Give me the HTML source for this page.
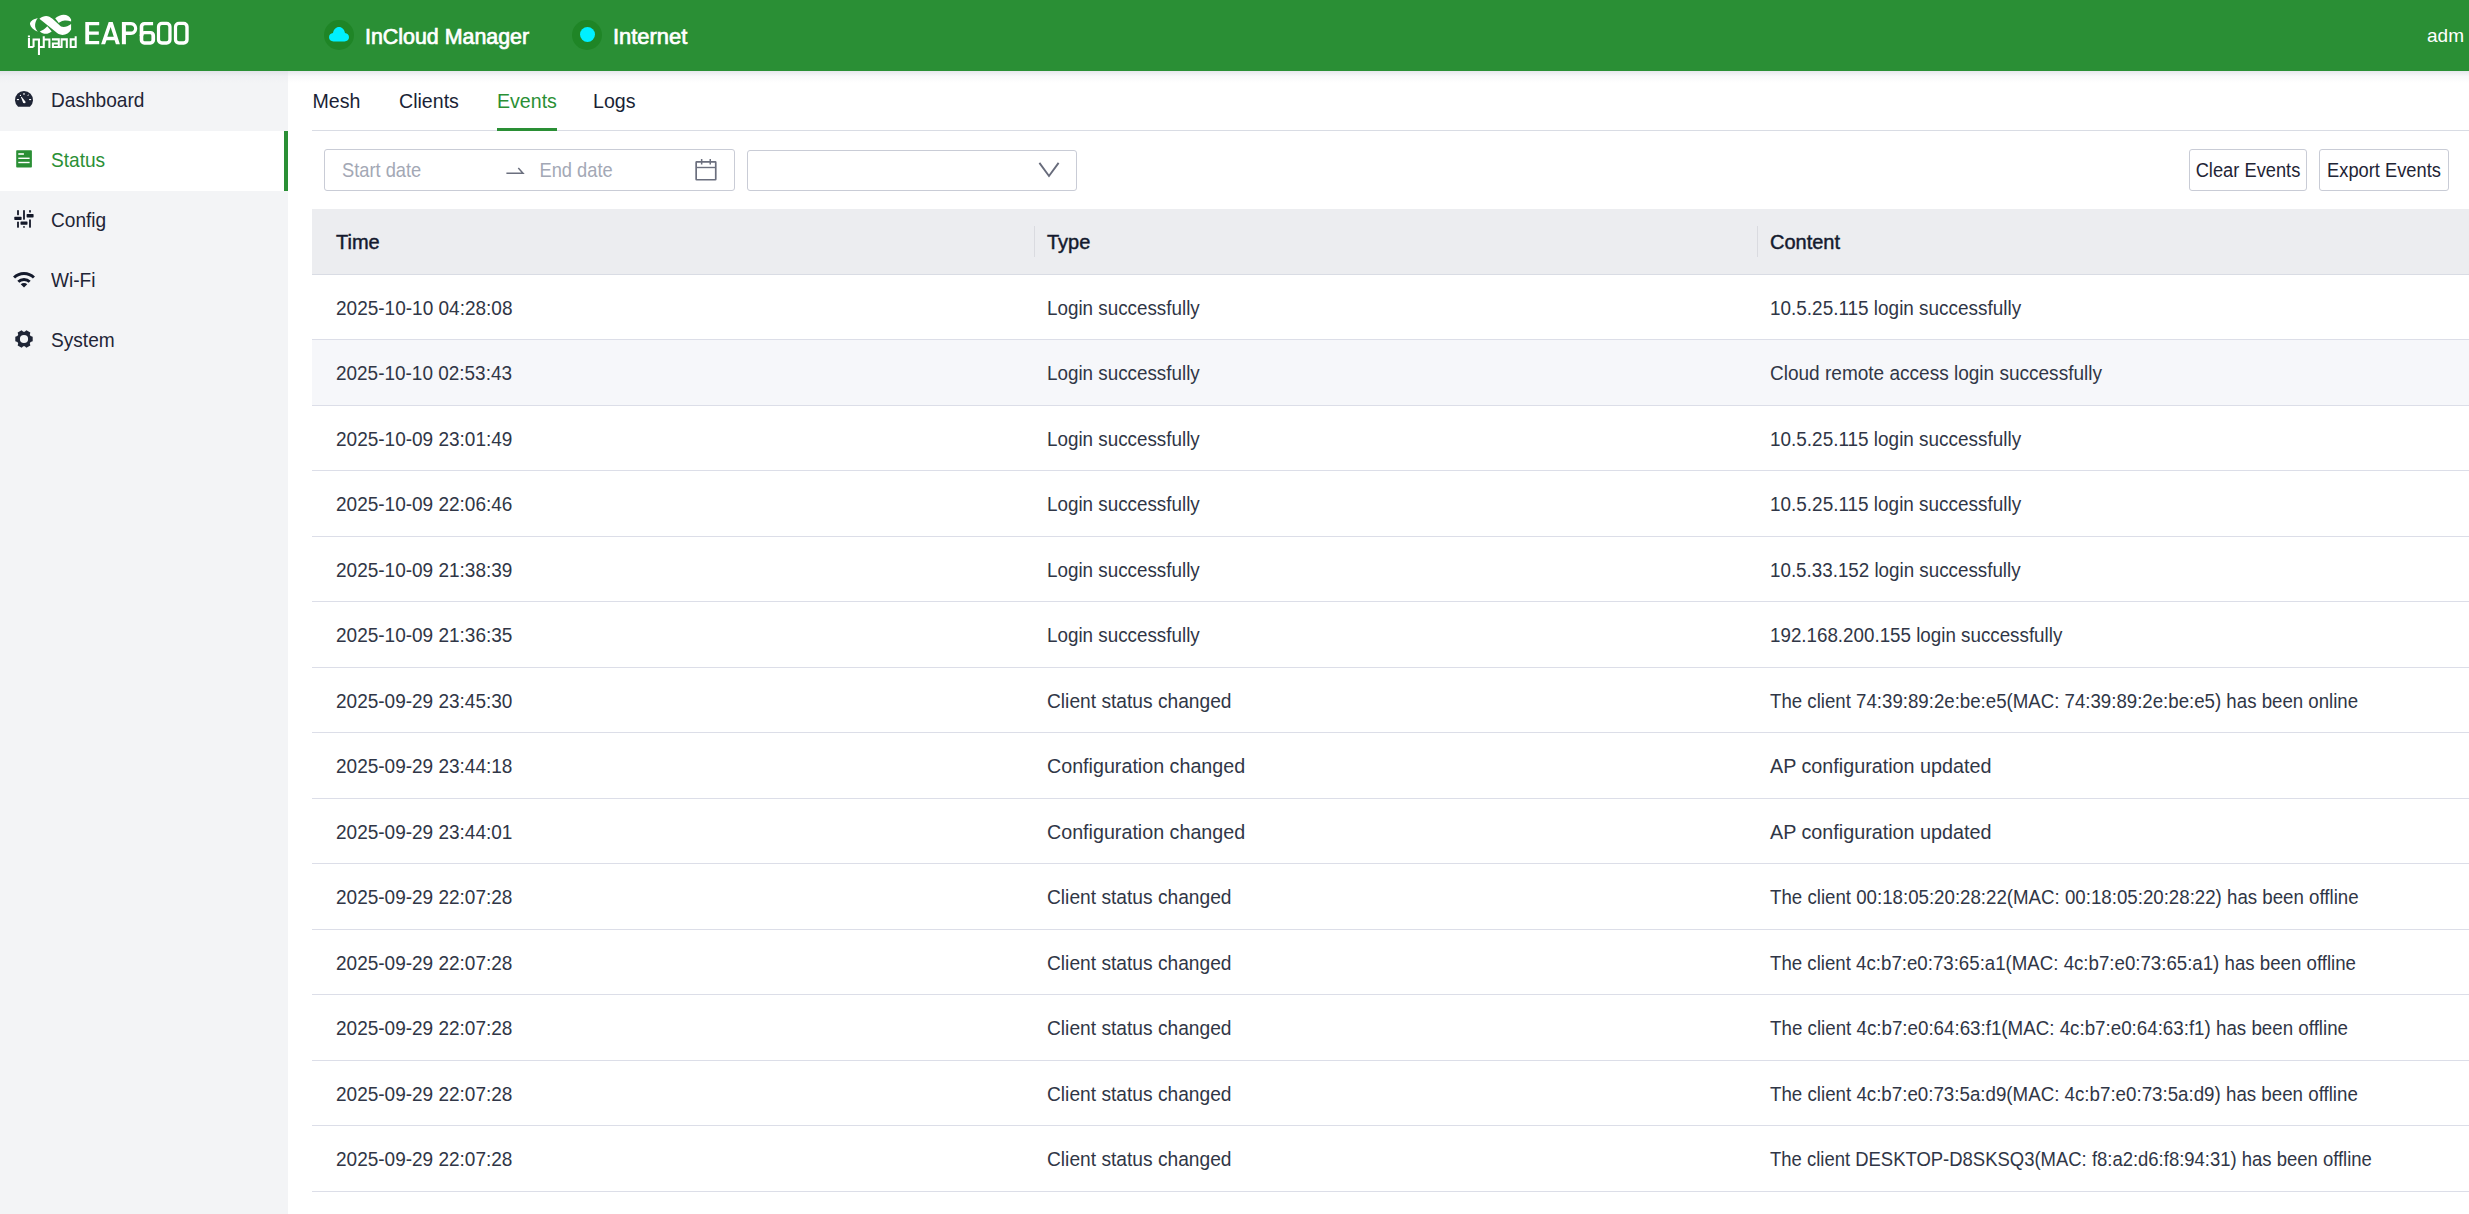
<!DOCTYPE html>
<html><head><meta charset="utf-8">
<style>
*{margin:0;padding:0;box-sizing:border-box}
html,body{width:2469px;height:1214px;overflow:hidden;background:#fff;font-family:"Liberation Sans",sans-serif;color:#1f2536}
.abs{position:absolute}
#hdr{position:absolute;left:0;top:0;width:2469px;height:70.5px;background:#2a8f35}
#shadow{position:absolute;left:0;top:70.5px;width:2469px;height:12px;background:linear-gradient(rgba(210,212,222,0.55),rgba(230,231,236,0.25) 45%,rgba(255,255,255,0));z-index:2}
#side{position:absolute;left:0;top:70.5px;width:288px;height:1144px;background:#f3f4f6}
.mi{position:absolute;left:0;width:288px;height:60px}
.mi .t{position:absolute;left:51px;top:0;line-height:60px;font-size:19.1px;color:#1f2536;white-space:nowrap;transform:scaleY(1.08);transform-origin:0 36.6px}
.mi svg{position:absolute}
.tab{position:absolute;top:86px;font-size:19.6px;line-height:30px;color:#1a1f36;white-space:nowrap;transform:scaleY(1.07);transform-origin:0 21.8px}
.row{position:absolute;left:312px;width:2157px;height:65.5px;border-bottom:1px solid #dcdee8}
.c{position:absolute;top:0;line-height:65px;font-size:18.8px;color:#303646;white-space:nowrap;transform:translateY(1px) scaleY(1.09);transform-origin:0 39px}
.c1{left:24px}.c2{left:735px}.c3{left:1458px}
.btn{position:absolute;top:149px;height:41.5px;border:1px solid #c9ccd6;border-radius:3px;background:#fff;color:#1f2536;white-space:nowrap;text-align:center}
.btn span{display:block;font-size:18.3px;line-height:39px;transform:translateY(0.8px) scaleY(1.1);transform-origin:50% 26px}
</style></head><body>
<div id="hdr">
  <!-- logo -->
  <svg class="abs" style="left:0;top:0" width="90" height="60" viewBox="0 0 90 60">
    <g fill="#fff">
      <path d="M37.8 17.9C32 19.6 29.5 21.8 30.1 24.5C30.7 27.3 33.5 30 37.8 31.8C35.8 29.5 34.9 27 35.1 24.8C35.3 22.3 36.2 19.8 37.8 17.9Z"/>
      <path d="M39.4 18.7C41.5 16.8 44 15.9 46.1 15.9C48.5 15.9 50.5 17 52.5 18.8L58.8 24.5C60.2 26.2 61.8 27 63.6 27C66 27 68.5 25.6 71.1 23.9L71.1 29.5C69.5 33 66 34.9 62.4 34.9C59.5 34.9 57.5 33.5 55.6 31.8Z"/>
      <path d="M55.2 18.3C58 16 61 14.7 63.5 14.7C67 14.7 70 16.5 71.1 19.5L71.1 21.4C68 20.5 65.5 20.4 63.5 20.8C61.5 21.2 60 22 58.8 23.1Z"/>
      <path d="M39.8 31.4C42.5 30.5 45 28.5 47.3 26.2L51.7 31.4C49.5 33.2 47.5 33.7 46 33.7C43.5 33.7 41.5 32.8 39.8 31.4Z"/>
    </g>
    <path fill="none" stroke="#fff" stroke-width="2.05" stroke-linecap="butt" stroke-linejoin="miter" d="M28.95 37.7V47H33.55M33.55 47V39.55H38.95V55M38.95 47H43.75M43.75 36.2V48M43.75 39.55H49.4V48M51.9 39.35H58.8V47H52.9V43.5H58.8M58.8 47H61.6M61.6 48V39.35H66.8V48M75.7 39.35H70.7V47H75.7M75.7 36.2V48"/>
    <rect x="27.9" y="35.5" width="2.1" height="1.5" fill="#fff"/>
  </svg>
  <svg class="abs" style="left:0;top:0" width="200" height="60" viewBox="0 0 200 60"><g fill="#fff" fill-rule="evenodd"><path d="M85.3 22H99.2V25.2H89.1V31.5H98.8V34.8H89.1V41H99.2V44.3H85.3Z"/><path d="M108.7 22H112.7L119.9 44.3H115.9L114.6 40.3H106.5L105.1 44.3H101.1ZM110.6 26.9L113.8 36.8H107.3Z"/><path d="M121.9 22H131C134.5 22 137.2 24.9 137.2 28.4C137.2 32 134.5 34.9 131 34.9H125.9V44.3H121.9ZM125.9 25.2H130.8C132.7 25.2 134.1 26.6 134.1 28.4C134.1 30.2 132.7 31.6 130.8 31.6H125.9Z"/><path d="M144.29999999999998 30.9H150.5A4.6 4.6 0 0 1 155.1 35.5V40.1A4.6 4.6 0 0 1 150.5 44.7H144.29999999999998A4.6 4.6 0 0 1 139.7 40.1V35.5A4.6 4.6 0 0 1 144.29999999999998 30.9ZM144.70000000000002 34.3H150.0A1.4 1.4 0 0 1 151.4 35.699999999999996V39.9A1.4 1.4 0 0 1 150.0 41.3H144.70000000000002A1.4 1.4 0 0 1 143.3 39.9V35.699999999999996A1.4 1.4 0 0 1 144.70000000000002 34.3Z"/><path d="M139.7 36V26.6A4.6 4.6 0 0 1 144.3 22H153.1V25.2H144.8A1.5 1.5 0 0 0 143.3 26.7V36Z"/><path d="M161.9 21.7H166.6A5 5 0 0 1 171.6 26.7V39.7A5 5 0 0 1 166.6 44.7H161.9A5 5 0 0 1 156.9 39.7V26.7A5 5 0 0 1 161.9 21.7ZM161.9 25.1H166.5A1.8 1.8 0 0 1 168.3 26.900000000000002V39.400000000000006A1.8 1.8 0 0 1 166.5 41.2H161.9A1.8 1.8 0 0 1 160.1 39.400000000000006V26.900000000000002A1.8 1.8 0 0 1 161.9 25.1Z"/><path d="M178.9 21.7H183.7A5 5 0 0 1 188.7 26.7V39.7A5 5 0 0 1 183.7 44.7H178.9A5 5 0 0 1 173.9 39.7V26.7A5 5 0 0 1 178.9 21.7ZM178.9 25.1H183.5A1.8 1.8 0 0 1 185.3 26.900000000000002V39.400000000000006A1.8 1.8 0 0 1 183.5 41.2H178.9A1.8 1.8 0 0 1 177.1 39.400000000000006V26.900000000000002A1.8 1.8 0 0 1 178.9 25.1Z"/></g></svg>
  <!-- InCloud -->
  <div class="abs" style="left:324px;top:20px;width:30px;height:30px;border-radius:50%;background:#1f8526"></div>
  <svg class="abs" style="left:329px;top:26px" width="20" height="16" viewBox="0 0 20 16">
    <path fill="#00f0ff" d="M4.5 15.5 C1.8 15.5 0 13.6 0 11.3 C0 9 1.8 7.2 4 7.1 C4.6 3.4 7 1 10 1 C13 1 15.4 3.4 16 7.1 C18.2 7.2 20 9 20 11.3 C20 13.6 18.2 15.5 15.5 15.5Z"/>
  </svg>
  <div class="abs" style="left:365px;top:22px;font-size:21.4px;line-height:30px;-webkit-text-stroke:0.7px #fff;color:#fff">InCloud Manager</div>
  <!-- Internet -->
  <div class="abs" style="left:572px;top:20px;width:30px;height:30px;border-radius:50%;background:#1f8526"></div>
  <div class="abs" style="left:579.5px;top:27.2px;width:15.3px;height:15.3px;border-radius:50%;background:#00f0ff"></div>
  <div class="abs" style="left:613px;top:22px;font-size:21.9px;line-height:30px;-webkit-text-stroke:0.7px #fff;color:#fff">Internet</div>
  <div class="abs" style="left:2427px;top:21px;font-size:19px;line-height:30px;color:#fff">adm</div>
</div>
<div id="shadow"></div>
<div id="side">
  <div class="mi" style="top:0">
        <div class="t">Dashboard</div>
  </div>
  <div class="mi" style="top:60.5px;background:#fff">
    <div class="t" style="color:#2a8f35">Status</div>
    <div class="abs" style="left:284px;top:0;width:4px;height:60px;background:#2a8f35"></div>
  </div>
  <div class="mi" style="top:120.5px"><div class="t">Config</div></div>
  <div class="mi" style="top:180.5px"><div class="t">Wi-Fi</div></div>
  <div class="mi" style="top:240.5px"><div class="t">System</div></div>
</div>

<!-- tabs -->
<div class="tab" style="left:312.5px">Mesh</div>
<div class="tab" style="left:399px">Clients</div>
<div class="tab" style="left:497px;color:#2a8f35">Events</div>
<div class="tab" style="left:593px">Logs</div>
<div class="abs" style="left:312px;top:130px;width:2157px;height:1px;background:#d9dce4"></div>
<div class="abs" style="left:497px;top:128px;width:60px;height:3px;background:#2a8f35"></div>

<!-- filters -->
<div class="abs" style="left:324px;top:149px;width:411px;height:42px;border:1px solid #c9ccd6;border-radius:3px"></div>
<div class="abs" style="left:342px;top:155px;font-size:18.3px;line-height:30px;color:#a3a8b5;transform:translateY(0.7px) scaleY(1.09);transform-origin:0 21.5px">Start date</div>
<div class="abs" style="left:539.5px;top:155px;font-size:18.3px;line-height:30px;color:#a3a8b5;transform:translateY(0.7px) scaleY(1.09);transform-origin:0 21.5px">End date</div>
<div class="abs" style="left:747px;top:150px;width:330px;height:41px;border:1px solid #c9ccd6;border-radius:3px"></div>

<div class="btn" style="left:2189px;width:118px"><span>Clear Events</span></div>
<div class="btn" style="left:2319px;width:130px"><span>Export Events</span></div>

<!-- table header -->
<div class="abs" style="left:312px;top:209px;width:2157px;height:65.5px;background:#ecedf0;border-bottom:1px solid #d9dce4"></div>
<div class="abs" style="left:1034px;top:226px;width:1px;height:31px;background:#dadbe0"></div>
<div class="abs" style="left:1757px;top:226px;width:1px;height:31px;background:#dadbe0"></div>
<div class="abs" style="left:336px;top:209.8px;line-height:65px;font-size:20px;-webkit-text-stroke:0.45px #141a2e;color:#141a2e">Time</div>
<div class="abs" style="left:1047px;top:209.8px;line-height:65px;font-size:20px;-webkit-text-stroke:0.45px #141a2e;color:#141a2e">Type</div>
<div class="abs" style="left:1770px;top:209.8px;line-height:65px;font-size:20px;-webkit-text-stroke:0.45px #141a2e;color:#141a2e">Content</div>

<div id="rows">
<div class="row" style="top:274.5px"><div class="c c1" style="transform:translateY(1px) scale(1.0121,1.09)">2025-10-10 04:28:08</div><div class="c c2" style="transform:translateY(1px) scale(1.002,1.09)">Login successfully</div><div class="c c3" style="transform:translateY(1px) scale(1.008,1.09)">10.5.25.115 login successfully</div></div>
<div class="row" style="top:340.0px;background:#f6f7fa"><div class="c c1" style="transform:translateY(1px) scale(1.0092,1.09)">2025-10-10 02:53:43</div><div class="c c2" style="transform:translateY(1px) scale(1.002,1.09)">Login successfully</div><div class="c c3" style="transform:translateY(1px) scale(1.0128,1.09)">Cloud remote access login successfully</div></div>
<div class="row" style="top:405.5px"><div class="c c1" style="transform:translateY(1px) scale(1.0115,1.09)">2025-10-09 23:01:49</div><div class="c c2" style="transform:translateY(1px) scale(1.002,1.09)">Login successfully</div><div class="c c3" style="transform:translateY(1px) scale(1.008,1.09)">10.5.25.115 login successfully</div></div>
<div class="row" style="top:471.0px"><div class="c c1" style="transform:translateY(1px) scale(1.0115,1.09)">2025-10-09 22:06:46</div><div class="c c2" style="transform:translateY(1px) scale(1.002,1.09)">Login successfully</div><div class="c c3" style="transform:translateY(1px) scale(1.008,1.09)">10.5.25.115 login successfully</div></div>
<div class="row" style="top:536.5px"><div class="c c1" style="transform:translateY(1px) scale(1.0115,1.09)">2025-10-09 21:38:39</div><div class="c c2" style="transform:translateY(1px) scale(1.002,1.09)">Login successfully</div><div class="c c3" style="transform:translateY(1px) scale(1.0,1.09)">10.5.33.152 login successfully</div></div>
<div class="row" style="top:602.0px"><div class="c c1" style="transform:translateY(1px) scale(1.0115,1.09)">2025-10-09 21:36:35</div><div class="c c2" style="transform:translateY(1px) scale(1.002,1.09)">Login successfully</div><div class="c c3" style="transform:translateY(1px) scale(0.9997,1.09)">192.168.200.155 login successfully</div></div>
<div class="row" style="top:667.5px"><div class="c c1" style="transform:translateY(1px) scale(1.0115,1.09)">2025-09-29 23:45:30</div><div class="c c2" style="transform:translateY(1px) scale(1.0217,1.09)">Client status changed</div><div class="c c3" style="transform:translateY(1px) scale(0.9934,1.09)">The client 74:39:89:2e:be:e5(MAC: 74:39:89:2e:be:e5) has been online</div></div>
<div class="row" style="top:733.0px"><div class="c c1" style="transform:translateY(1px) scale(1.0115,1.09)">2025-09-29 23:44:18</div><div class="c c2" style="transform:translateY(1px) scale(1.0484,1.09)">Configuration changed</div><div class="c c3" style="transform:translateY(1px) scale(1.0514,1.09)">AP configuration updated</div></div>
<div class="row" style="top:798.5px"><div class="c c1" style="transform:translateY(1px) scale(1.0115,1.09)">2025-09-29 23:44:01</div><div class="c c2" style="transform:translateY(1px) scale(1.0484,1.09)">Configuration changed</div><div class="c c3" style="transform:translateY(1px) scale(1.0514,1.09)">AP configuration updated</div></div>
<div class="row" style="top:864.0px"><div class="c c1" style="transform:translateY(1px) scale(1.0115,1.09)">2025-09-29 22:07:28</div><div class="c c2" style="transform:translateY(1px) scale(1.0217,1.09)">Client status changed</div><div class="c c3" style="transform:translateY(1px) scale(0.9948,1.09)">The client 00:18:05:20:28:22(MAC: 00:18:05:20:28:22) has been offline</div></div>
<div class="row" style="top:929.5px"><div class="c c1" style="transform:translateY(1px) scale(1.0115,1.09)">2025-09-29 22:07:28</div><div class="c c2" style="transform:translateY(1px) scale(1.0217,1.09)">Client status changed</div><div class="c c3" style="transform:translateY(1px) scale(0.9939,1.09)">The client 4c:b7:e0:73:65:a1(MAC: 4c:b7:e0:73:65:a1) has been offline</div></div>
<div class="row" style="top:995.0px"><div class="c c1" style="transform:translateY(1px) scale(1.0115,1.09)">2025-09-29 22:07:28</div><div class="c c2" style="transform:translateY(1px) scale(1.0217,1.09)">Client status changed</div><div class="c c3" style="transform:translateY(1px) scale(0.9981,1.09)">The client 4c:b7:e0:64:63:f1(MAC: 4c:b7:e0:64:63:f1) has been offline</div></div>
<div class="row" style="top:1060.5px"><div class="c c1" style="transform:translateY(1px) scale(1.0115,1.09)">2025-09-29 22:07:28</div><div class="c c2" style="transform:translateY(1px) scale(1.0217,1.09)">Client status changed</div><div class="c c3" style="transform:translateY(1px) scale(0.9971,1.09)">The client 4c:b7:e0:73:5a:d9(MAC: 4c:b7:e0:73:5a:d9) has been offline</div></div>
<div class="row" style="top:1126.0px"><div class="c c1" style="transform:translateY(1px) scale(1.0115,1.09)">2025-09-29 22:07:28</div><div class="c c2" style="transform:translateY(1px) scale(1.0217,1.09)">Client status changed</div><div class="c c3" style="transform:translateY(1px) scale(0.9832,1.09)">The client DESKTOP-D8SKSQ3(MAC: f8:a2:d6:f8:94:31) has been offline</div></div>
</div>
<svg class="abs" style="left:0;top:0;z-index:5" width="2469" height="1214" viewBox="0 0 2469 1214">
  <!-- dashboard gauge -->
  <g>
    <path fill="#1f2536" d="M18.1 106.8A9 9 0 1 1 29.9 106.8Z"/>
    <g fill="#fff">
      <rect x="16.9" y="99" width="2" height="1.1"/>
      <rect x="29.1" y="99" width="2" height="1.1"/>
      <rect x="23.3" y="93.2" width="1.4" height="1.5"/>
      <rect x="19.9" y="94.9" width="1.1" height="1.1"/>
      <path d="M27.1 95.9L28.9 94.2L29.1 95.1L27.7 96.1Z"/>
      <path d="M20.9 97.1L21.6 96.7L25.7 101.9L25.1 103.3L23.2 103.1Z"/>
    </g>
  </g>
  <!-- status doc -->
  <rect x="16.2" y="150.2" width="15.7" height="17.4" rx="0.8" fill="#2a8f35"/>
  <g fill="#fff">
    <rect x="18.3" y="153.2" width="5.6" height="1.6"/>
    <rect x="18.3" y="157.6" width="11.3" height="1.4"/>
    <rect x="18.3" y="161.8" width="11.3" height="1.4"/>
  </g>
  <!-- config sliders -->
  <g fill="#131829">
    <rect x="17.1" y="209.9" width="1.8" height="5.4" rx="0.9"/>
    <rect x="17.1" y="221.4" width="1.8" height="6.4" rx="0.9"/>
    <rect x="14.3" y="216.8" width="7.3" height="3.1" rx="0.6"/>
    <rect x="23.1" y="209.9" width="1.8" height="9.9" rx="0.9"/>
    <rect x="23.1" y="226" width="1.8" height="1.8" rx="0.9"/>
    <rect x="20.5" y="221.5" width="7" height="3.2" rx="0.6"/>
    <rect x="29.1" y="209.9" width="1.8" height="2.8" rx="0.9"/>
    <rect x="29.1" y="219.2" width="1.8" height="8.6" rx="0.9"/>
    <rect x="26.6" y="214.1" width="7" height="3.3" rx="0.6"/>
  </g>
  <!-- wifi -->
  <path fill="#141a2c" d="M13.04 276.54A15.5 15.5 0 0 1 34.96 276.54L32.91 278.59A12.6 12.6 0 0 0 15.09 278.59ZM17.28 280.78A9.5 9.5 0 0 1 30.72 280.78L28.67 282.83A6.6 6.6 0 0 0 19.33 282.83ZM24 287.5L20.75 284.25A4.6 4.6 0 0 1 27.25 284.25Z"/>
  <!-- gear -->
  <path fill="#1f2536" fill-rule="evenodd" d="M30.59 336.10 L32.70 336.70 L32.70 341.30 L30.59 341.90 L29.81 343.26 L30.34 345.39 L26.36 347.69 L24.78 346.16 L23.22 346.16 L21.64 347.69 L17.66 345.39 L18.19 343.26 L17.41 341.90 L15.30 341.30 L15.30 336.70 L17.41 336.10 L18.19 334.74 L17.66 332.61 L21.64 330.31 L23.22 331.84 L24.78 331.84 L26.36 330.31 L30.34 332.61 L29.81 334.74ZM28.1 339A4.1 4.1 0 1 0 19.9 339A4.1 4.1 0 1 0 28.1 339Z"/>
  <!-- date arrow -->
  <path fill="none" stroke="#6b6f7e" stroke-width="1.5" d="M506.4 173.2H523L518.3 168"/>
  <!-- calendar -->
  <g fill="none" stroke="#6b6f7e">
    <rect x="696.15" y="161.95" width="19.6" height="17.8" stroke-width="1.7" rx="0.5"/>
    <path d="M696 167.5H716" stroke-width="1.4"/>
    <path d="M701.65 159V164.5M710.25 159V164.5" stroke-width="1.5"/>
  </g>
  <!-- chevron -->
  <path fill="none" stroke="#676b7b" stroke-width="1.9" d="M1039.4 162.9L1049 176L1058.6 162.9"/>
</svg>
</body></html>
